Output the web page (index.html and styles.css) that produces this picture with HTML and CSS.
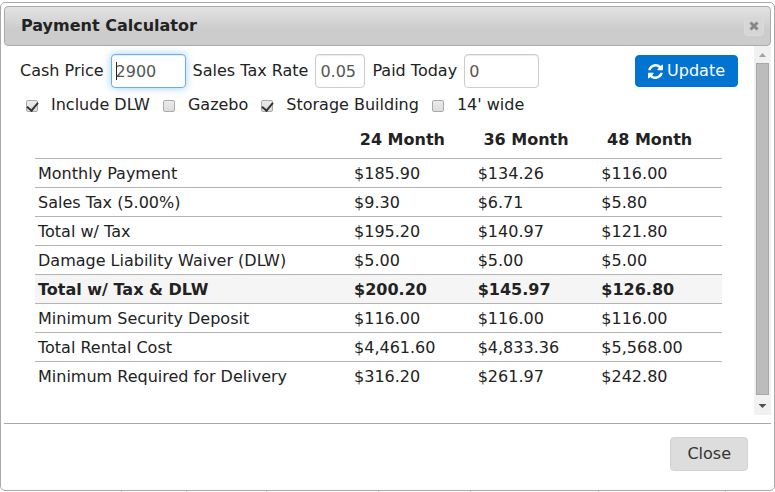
FILE: index.html
```html
<!DOCTYPE html>
<html lang="en">

<head>
    <meta charset="UTF-8">
    <title>Payment Calculator</title>
    <link rel="stylesheet" href="styles.css">
</head>

<body>

    <div class="dialog" role="dialog" aria-labelledby="dialog-title">
        <header class="titlebar">
            <h1 id="dialog-title">Payment Calculator</h1>
            <button type="button" class="titlebar-close" aria-label="Close dialog">
                <svg width="10" height="10" viewBox="0 0 10 10">
                    <path d="M1.500 1.500L8.500 8.500M8.500 1.500L1.500 8.500" stroke="#888" stroke-width="3" />
                </svg>
            </button>
        </header>

        <div class="content">
            <form class="calculator">
                <div class="fields">
                    <label for="price">Cash Price</label>
                    <input type="text" id="price" class="focused" value="2900">
                    <label for="rate">Sales Tax Rate</label>
                    <input type="text" id="rate" class="short" value="0.05">
                    <label for="paid">Paid Today</label>
                    <input type="text" id="paid" value="0">
                    <button type="button" class="update">
                        <svg width="15" height="15" viewBox="0 0 1536 1536" fill="#fff">
                            <path d="M1511 928q0 5-1 7-64 268-268 434.500T764 1536q-146 0-282.500-55T238 1324l-129 129q-19 19-45 19t-45-19-19-45V960q0-26 19-45t45-19h448q26 0 45 19t19 45-19 45l-137 137q71 66 161 102t187 36q134 0 250-65t186-179q11-17 53-117 8-23 30-23h192q13 0 22.500 9.500t9.500 22.500zm25-800v448q0 26-19 45t-45 19h-448q-26 0-45-19t-19-45 19-45l138-138Q969 256 768 256q-134 0-250 65T332 500q-11 17-53 117-8 23-30 23H50q-13 0-22.500-9.500T18 608v-7q65-268 270-434.500T768 0q146 0 284 55.500T1297 212l130-129q19-19 45-19t45 19 19 45z" />
                        </svg>
                        Update
                    </button>
                </div>

                <div class="options">
                    <input type="checkbox" id="dlw" checked>
                    <label for="dlw">Include DLW</label>
                    <input type="checkbox" id="gazebo">
                    <label for="gazebo">Gazebo</label>
                    <input type="checkbox" id="storage" checked>
                    <label for="storage">Storage Building</label>
                    <input type="checkbox" id="wide">
                    <label for="wide">14' wide</label>
                </div>

                <table>
                    <thead>
                        <tr>
                            <td></td>
                            <th>24 Month</th>
                            <th>36 Month</th>
                            <th>48 Month</th>
                        </tr>
                    </thead>
                    <tbody>
                        <tr>
                            <td>Monthly Payment</td>
                            <td>$185.90</td>
                            <td>$134.26</td>
                            <td>$116.00</td>
                        </tr>
                        <tr>
                            <td>Sales Tax (5.00%)</td>
                            <td>$9.30</td>
                            <td>$6.71</td>
                            <td>$5.80</td>
                        </tr>
                        <tr>
                            <td>Total w/ Tax</td>
                            <td>$195.20</td>
                            <td>$140.97</td>
                            <td>$121.80</td>
                        </tr>
                        <tr>
                            <td>Damage Liability Waiver (DLW)</td>
                            <td>$5.00</td>
                            <td>$5.00</td>
                            <td>$5.00</td>
                        </tr>
                        <tr class="total">
                            <td>Total w/ Tax &amp; DLW</td>
                            <td>$200.20</td>
                            <td>$145.97</td>
                            <td>$126.80</td>
                        </tr>
                        <tr>
                            <td>Minimum Security Deposit</td>
                            <td>$116.00</td>
                            <td>$116.00</td>
                            <td>$116.00</td>
                        </tr>
                        <tr>
                            <td>Total Rental Cost</td>
                            <td>$4,461.60</td>
                            <td>$4,833.36</td>
                            <td>$5,568.00</td>
                        </tr>
                        <tr>
                            <td>Minimum Required for Delivery</td>
                            <td>$316.20</td>
                            <td>$261.97</td>
                            <td>$242.80</td>
                        </tr>
                    </tbody>
                </table>
            </form>

            <div class="scrollbar" aria-hidden="true">
                <svg width="17" height="17" viewBox="0 0 17 17" fill="#a3a3a3">
                    <path d="M5 11L8.500 7L12 11Z" />
                </svg>
                <div class="thumb"></div>
                <svg width="17" height="20" viewBox="0 0 17 20" fill="#505050">
                    <path d="M4.500 9L8.500 13L12.500 9Z" />
                </svg>
            </div>
        </div>

        <footer class="buttons">
            <button type="button" class="close">Close</button>
        </footer>
    </div>

    <!-- top edge of the grid behind the dialog -->
    <div class="behind" aria-hidden="true">
        <span></span><span></span><span></span><span></span><span></span><span></span><span></span>
    </div>

</body>

</html>
```

FILE: styles.css
```css
* {
    box-sizing: border-box;
}

body {
    margin: 0;
    padding-top: 2px;
    background-color: white;
    color: #222;
    font-family: "DejaVu Sans", Verdana, sans-serif;
    font-size: 16px;
    line-height: 22px;
}

button,
input {
    font: inherit;
}

.dialog {
    padding: 3px;
    border: 1px solid #aaa;
    border-radius: 5px;
    background-color: white;
}

.titlebar {
    display: flex;
    align-items: center;
    justify-content: space-between;
    height: 40px;
    padding: 0 6px 0 16px;
    border: 1px solid #aaa;
    border-radius: 4px;
    background: linear-gradient(#e3e3e3, #cccccc 60%, #cccccc);
}

h1 {
    margin: 0;
    font-size: 16px;
}

.titlebar-close {
    display: flex;
    align-items: center;
    justify-content: center;
    width: 20px;
    height: 20px;
    padding: 0;
    border: 1px solid #dadada;
    border-radius: 4px;
    background-color: #d6d6d6;
}

.content {
    display: flex;
    min-height: 369px;
}

.calculator {
    flex: 1;
    padding: 8px 16px 0;
}

.fields {
    display: flex;
    align-items: center;
    gap: 7px;
}

.fields input {
    width: 75px;
    height: 34px;
    padding: 4px;
    border: 1px solid #ccc;
    border-radius: 4px;
    color: #555;
    box-shadow: inset 0 1px 1px rgba(0, 0, 0, 0.08);
}

.fields .short {
    width: 50px;
}

/* focus ring and text caret */
.fields .focused {
    border-color: #66afe9;
    outline: none;
    background: linear-gradient(#222, #222) 4px center / 1px 18px no-repeat white;
    box-shadow: inset 0 1px 1px rgba(0, 0, 0, 0.08), 0 0 8px rgba(102, 175, 233, 0.6);
}

.update {
    display: flex;
    align-items: center;
    gap: 4px;
    height: 32px;
    margin-left: auto;
    padding: 0 12px;
    border: 1px solid #0074d0;
    border-radius: 4px;
    background-color: #0074d0;
    color: white;
}

.options {
    display: flex;
    align-items: center;
    padding: 6px 0 5px 6px;
}

.options label {
    margin: 0 13px;
}

.options input {
    appearance: none;
    width: 12px;
    height: 12px;
    margin: 2px 0 0;
    border: 1px solid #aaa;
    border-radius: 2px;
    background: linear-gradient(#ececec, #dcdcdc);
}

/* tick */
.options input:checked::before {
    content: "";
    display: block;
    width: 5px;
    height: 9px;
    margin: -1px 0 0 2px;
    border: solid #333;
    border-width: 0 2px 2px 0;
    transform: rotate(40deg);
}

table {
    width: calc(100% - 31px);
    margin: 0 0 0 15px;
    border-collapse: collapse;
    table-layout: fixed;
}

th,
td {
    width: 18%;
    padding: 4px 3px 2px;
    text-align: left;
}

td:first-child {
    width: 46%;
}

th {
    height: 37px;
    padding-right: 24px;
    text-align: center;
    white-space: nowrap;
}

tbody tr {
    border-top: 1px solid #b4b4b4;
}

.total {
    background-color: #f5f5f5;
    font-weight: bold;
}

.scrollbar {
    display: flex;
    flex-direction: column;
    width: 17px;
    background-color: #f1f1f1;
}

.thumb {
    flex: 1;
    margin: 0 2px;
    border: 1px solid #a8a8a8;
    background-color: #bcbcbc;
}

.buttons {
    display: flex;
    justify-content: flex-end;
    margin-top: 8px;
    padding: 13px 23px 16px;
    border-top: 1px solid #aaa;
}

.close {
    height: 34px;
    padding: 0 16px;
    border: 1px solid #d3d3d3;
    border-radius: 4px;
    background-color: #dddddd;
    color: #333;
}

.behind {
    display: grid;
    grid-template-columns: 122fr 65fr 80fr 112fr 92fr 128fr 127fr 49fr;
    height: 1px;
}

.behind span {
    border-right: 1px solid #ccc;
}
```
